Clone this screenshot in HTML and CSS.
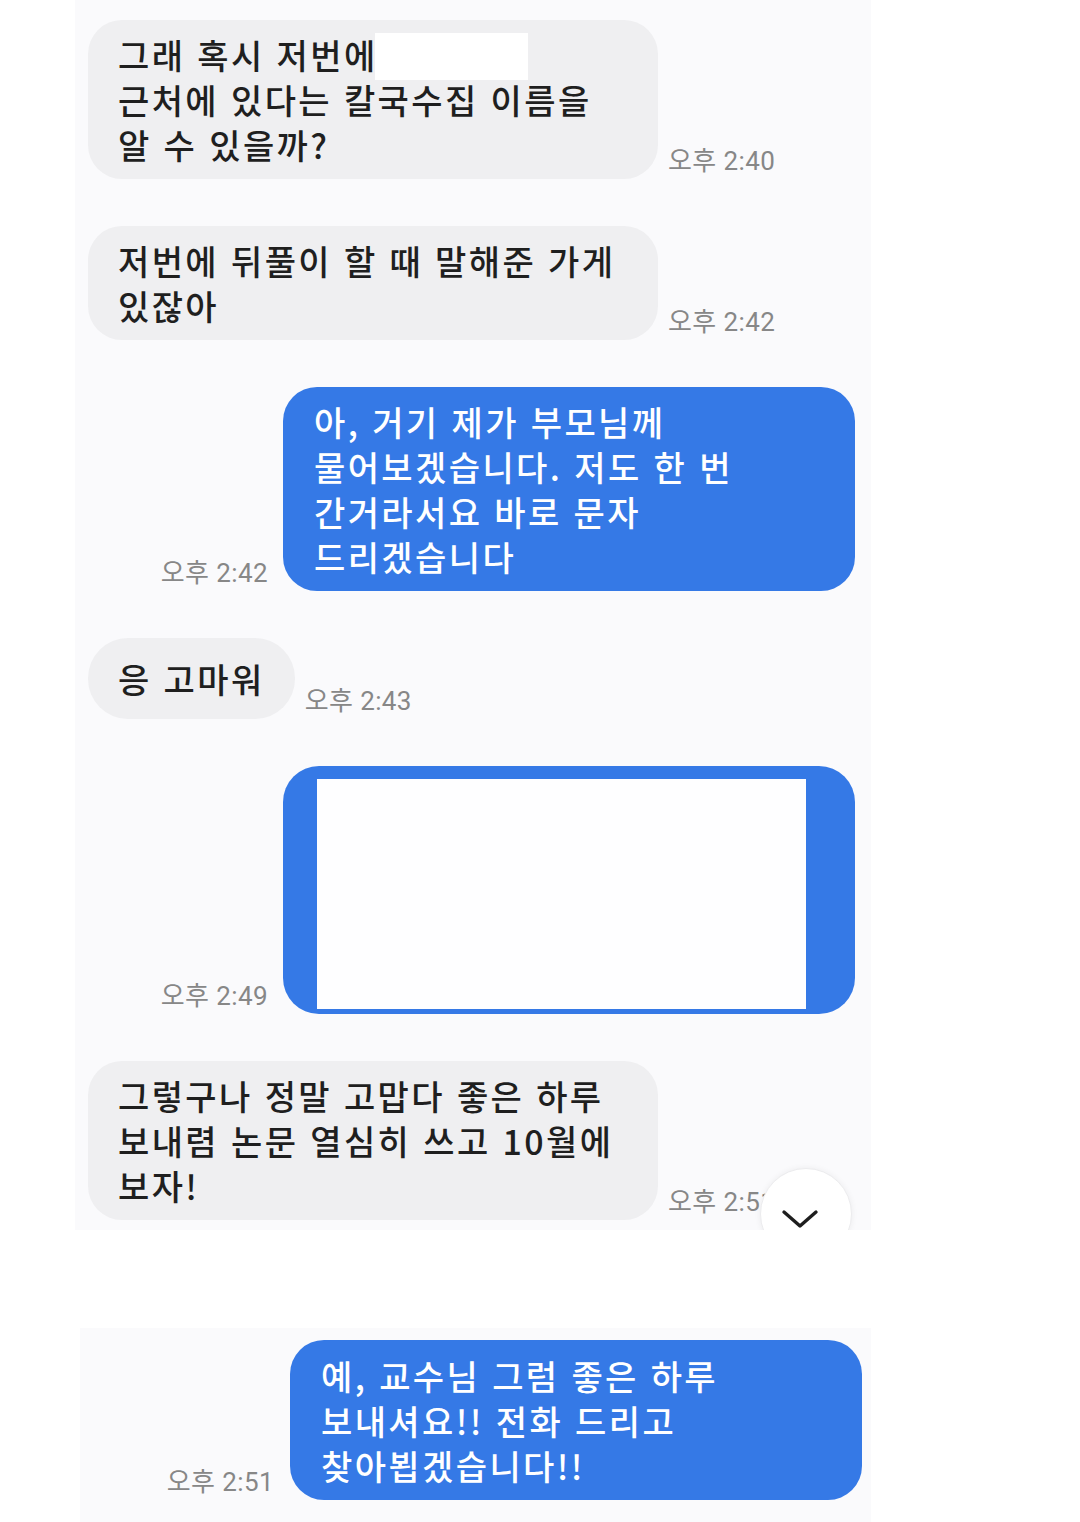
FILE: index.html
```html
<!DOCTYPE html>
<html lang="ko">
<head>
<meta charset="utf-8">
<title>chat</title>
<link rel="stylesheet" href="styles.css">
</head>
<body>
<div class="page">
  <section class="panel panel-top">
    <div class="row left">
      <div class="bubble gray wide redacted-host">그래 혹시 저번에<br>근처에 있다는 칼국수집 이름을<br>알 수 있을까?<span class="redact"></span></div>
      <span class="time">오후 2:40</span>
    </div>
    <div class="row left">
      <div class="bubble gray wide">저번에 뒤풀이 할 때 말해준 가게<br>있잖아</div>
      <span class="time">오후 2:42</span>
    </div>
    <div class="row right">
      <span class="time">오후 2:42</span>
      <div class="bubble blue wide">아, 거기 제가 부모님께<br>물어보겠습니다. 저도 한 번<br>간거라서요 바로 문자<br>드리겠습니다</div>
    </div>
    <div class="row left">
      <div class="bubble gray single">응 고마워</div>
      <span class="time">오후 2:43</span>
    </div>
    <div class="row right">
      <span class="time">오후 2:49</span>
      <div class="bubble blue wide framed"><div class="blank"></div></div>
    </div>
    <div class="row left">
      <div class="bubble gray wide">그렇구나 정말 고맙다 좋은 하루<br>보내렴 논문 열심히 쓰고 10월에<br>보자!</div>
      <span class="time">오후 2:51</span>
    </div>
    <button class="scroll-down" aria-label="scroll down">
      <svg width="40" height="22" viewBox="0 0 40 22"><path d="M4 4 L20 18 L36 4" fill="none" stroke="#1e1e1e" stroke-width="3.4" stroke-linecap="round" stroke-linejoin="round"/></svg>
    </button>
  </section>
  <section class="panel panel-bottom">
    <div class="row right">
      <span class="time">오후 2:51</span>
      <div class="bubble blue wide">예, 교수님 그럼 좋은 하루<br>보내셔요!! 전화 드리고<br>찾아뵙겠습니다!!</div>
    </div>
  </section>
</div>
</body>
</html>
```
FILE: styles.css
```css
html, body {
  margin: 0;
  padding: 0;
  background: #ffffff;
}
body {
  width: 1080px;
  height: 1522px;
  overflow: hidden;
  font-family: "Noto Sans CJK KR", "Noto Sans", sans-serif;
}
.page {
  display: flex;
  flex-direction: column;
}
.panel {
  background: #fafafc;
  display: flex;
  flex-direction: column;
  gap: 47px;
  position: relative;
  overflow: hidden;
}
.panel-top {
  margin-left: 75px;
  width: 796px;
  height: 1210px;
  padding-top: 20px;
}
.panel-bottom {
  margin-top: 98px;
  margin-left: 80px;
  width: 791px;
  padding-top: 12px;
  padding-bottom: 30px;
}
.row {
  display: flex;
  align-items: flex-end;
}
.row.left {
  padding-left: 13px;
  gap: 10px;
}
.row.right {
  justify-content: flex-end;
  padding-right: 16px;
  gap: 15px;
}
.panel-bottom .row.right {
  padding-right: 9px;
  gap: 16px;
}
.bubble {
  font-size: 34px;
  line-height: 45px;
  font-weight: 500;
  padding: 12px 30px;
  border-radius: 34px;
  letter-spacing: 2.4px;
  box-sizing: border-box;
  white-space: nowrap;
}
.bubble.wide {
  width: 570px;
}
.bubble.single {
  padding-top: 18px;
  padding-bottom: 18px;
  border-radius: 40px;
}
.panel-bottom .bubble.wide {
  width: 569px;
  padding-top: 13px;
  padding-bottom: 12px;
}
.gray {
  background: #efeff1;
  color: #1f1f1f;
}
.blue {
  background: #3579e6;
  color: #ffffff;
  padding-left: 31px;
}
.row.right .bubble.wide { width: 572px; }
.redacted-host {
  position: relative;
}
.redact {
  position: absolute;
  left: 287px;
  top: 13px;
  width: 153px;
  height: 47px;
  background: #ffffff;
}
.framed {
  padding: 13px 49px 5px 34px;
  border-radius: 36px;
}
.blank {
  height: 230px;
  background: #fefeff;
}
.time {
  font-family: "Roboto", "Noto Sans CJK KR", sans-serif;
  font-size: 26px;
  line-height: 30px;
  color: #878787;
  letter-spacing: 0.4px;
  margin-bottom: 3px;
  white-space: nowrap;
}
.scroll-down {
  position: absolute;
  left: 685px;
  top: 1168px;
  width: 92px;
  height: 92px;
  border-radius: 50%;
  background: #ffffff;
  border: 1px solid #ececee;
  box-shadow: 0 0 6px rgba(0,0,0,0.06);
  padding: 0;
  display: flex;
  align-items: center;
  justify-content: center;
}
.scroll-down svg {
  margin-top: 10px;
  margin-left: -12px;
}
```
